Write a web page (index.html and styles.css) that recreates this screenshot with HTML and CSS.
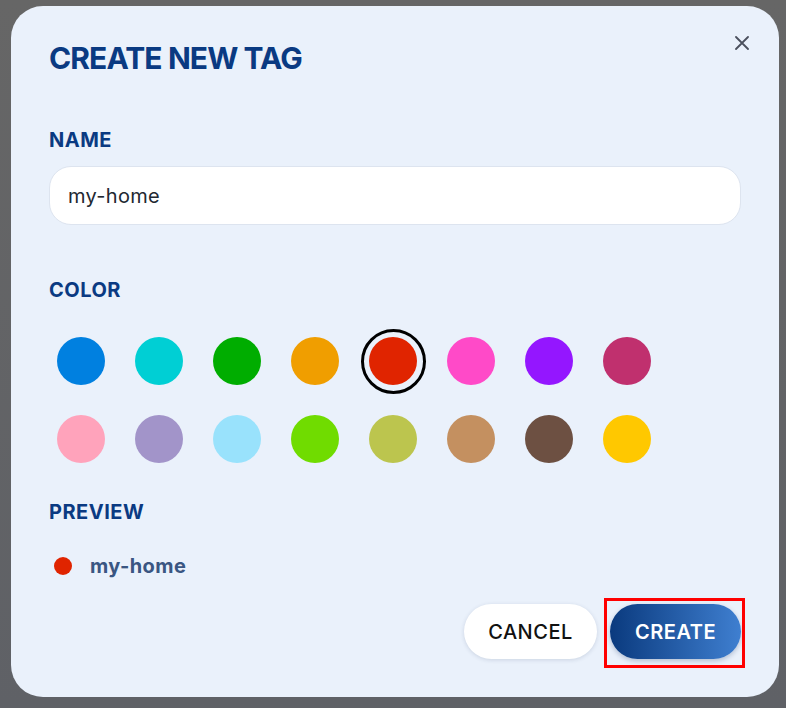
FILE: index.html
```html
<!DOCTYPE html>
<html lang="en">
<head>
  <meta charset="UTF-8">
  <meta name="viewport" content="width=device-width, initial-scale=1.0">
  <title>Create New Tag</title>
  <link rel="stylesheet" href="styles.css">
</head>
<body>
  <div class="dialog">
    <button class="close-btn" aria-label="Close">
      <svg width="14" height="14" viewBox="0 0 14 14">
        <path d="M1 1L13 13M13 1L1 13" stroke="#4b505d" stroke-width="1.8" stroke-linecap="round" fill="none"/>
      </svg>
    </button>

    <h1 class="title">CREATE NEW TAG</h1>

    <label class="label name-label" for="tag-name">NAME</label>
    <input class="name-input" id="tag-name" type="text" value="my-home">

    <div class="label color-label">COLOR</div>
    <div class="swatches">
      <span class="swatch"><span class="dot" style="background:#0080e0"></span></span>
      <span class="swatch"><span class="dot" style="background:#00cfd4"></span></span>
      <span class="swatch"><span class="dot" style="background:#00ad00"></span></span>
      <span class="swatch"><span class="dot" style="background:#f09e00"></span></span>
      <span class="swatch selected"><span class="dot" style="background:#e02400"></span></span>
      <span class="swatch"><span class="dot" style="background:#ff4ac8"></span></span>
      <span class="swatch"><span class="dot" style="background:#9416ff"></span></span>
      <span class="swatch"><span class="dot" style="background:#c0306e"></span></span>
      <span class="swatch"><span class="dot" style="background:#ffa3bb"></span></span>
      <span class="swatch"><span class="dot" style="background:#a294c9"></span></span>
      <span class="swatch"><span class="dot" style="background:#99e2fc"></span></span>
      <span class="swatch"><span class="dot" style="background:#70dc00"></span></span>
      <span class="swatch"><span class="dot" style="background:#bcc54e"></span></span>
      <span class="swatch"><span class="dot" style="background:#c49060"></span></span>
      <span class="swatch"><span class="dot" style="background:#6d5042"></span></span>
      <span class="swatch"><span class="dot" style="background:#ffc800"></span></span>
    </div>

    <div class="label preview-label">PREVIEW</div>
    <div class="preview">
      <span class="preview-dot"></span>
      <span class="preview-name">my-home</span>
    </div>

    <div class="actions">
      <button class="btn btn-cancel">CANCEL</button>
      <button class="btn btn-create">CREATE</button>
    </div>
  </div>
</body>
</html>
```

FILE: styles.css
```css
body {
  margin: 0;
  height: 708px;
  background: linear-gradient(#666666, #5f6166);
  font-family: Inter, "Noto Sans", sans-serif;
  overflow: hidden;
}
.dialog {
  position: relative;
  box-sizing: border-box;
  width: 768px;
  height: 691px;
  margin: 6px 0 0 11px;
  padding: 34px 38px 38px;
  background-color: #eaf1fb;
  border-radius: 32px;
  display: flex;
  flex-direction: column;
}
.close-btn {
  position: absolute;
  top: 30px;
  right: 30px;
  width: 14px;
  height: 14px;
  padding: 0;
  border: none;
  background: none;
  cursor: pointer;
  display: flex;
}
.title {
  margin: 0;
  font-size: 30px;
  line-height: 36px;
  font-weight: 700;
  letter-spacing: -0.9px;
  color: #0a3a82;
}
.label {
  display: block;
  font-size: 20px;
  line-height: 24px;
  font-weight: 700;
  letter-spacing: 0.5px;
  color: #0a3a82;
}
.name-label {
  margin-top: 52px;
}
.name-input {
  box-sizing: border-box;
  margin-top: 14px;
  height: 59px;
  width: 100%;
  padding: 0 18px;
  border: 1px solid #dde4ef;
  border-radius: 22px;
  background: #fff;
  font-family: inherit;
  font-size: 20px;
  letter-spacing: 0.3px;
  color: #222831;
  outline: none;
}
.color-label {
  margin-top: 53px;
}
.swatches {
  margin-top: 27px;
  display: grid;
  grid-template-columns: repeat(8, 64px);
  gap: 14px;
}
.swatch {
  width: 64px;
  height: 64px;
  display: flex;
  align-items: center;
  justify-content: center;
  border-radius: 50%;
  cursor: pointer;
}
.swatch.selected {
  border: 3px solid #000;
  box-sizing: border-box;
  width: 65px;
  height: 65px;
  margin: -0.5px;
}
.dot {
  width: 48px;
  height: 48px;
  border-radius: 50%;
}
.preview-label {
  margin-top: 29px;
}
.preview {
  margin-top: 30px;
  display: flex;
  align-items: center;
  gap: 18px;
  padding-left: 5px;
}
.preview-dot {
  width: 18px;
  height: 18px;
  border-radius: 50%;
  background: #e02400;
}
.preview-name {
  font-size: 20px;
  line-height: 24px;
  font-weight: 700;
  letter-spacing: 0.4px;
  color: #3a5682;
}
.actions {
  margin-top: auto;
  display: flex;
  justify-content: flex-end;
  gap: 13px;
}
.btn {
  height: 55px;
  padding: 0;
  border: none;
  border-radius: 28px;
  font-family: inherit;
  font-size: 20px;
  letter-spacing: 0.5px;
  cursor: pointer;
}
.btn-cancel {
  width: 133px;
  background: #fff;
  color: #111;
  font-weight: 500;
  box-shadow: 0 1px 4px rgba(30, 50, 90, 0.15);
}
.btn-create {
  position: relative;
  width: 131px;
  color: #fff;
  font-weight: 600;
  background: linear-gradient(90deg, #0a3a7e, #3f7fd0);
  box-shadow: 0 2px 5px rgba(10, 40, 90, 0.25);
}
.btn-create::after {
  content: "";
  position: absolute;
  top: -6px;
  bottom: -9px;
  left: -6px;
  right: -4px;
  border: 3px solid #ff0000;
}
```
